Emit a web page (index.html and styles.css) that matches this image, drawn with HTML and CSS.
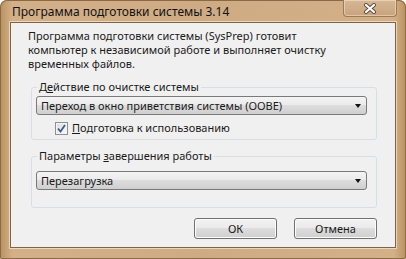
FILE: index.html
```html
<!DOCTYPE html>
<html lang="ru">
<head>
  <meta charset="UTF-8" />
  <meta name="viewport" content="width=device-width, initial-scale=1.0"/>
  <title>Программа подготовки системы 3.14</title>
  <link rel="stylesheet" href="styles.css">
</head>
<body>
  <div class="window">
    <div class="titlebar">
      <span class="title">Программа подготовки системы 3.14</span>
      <div class="close">
        <svg width="14" height="11" viewBox="0 0 14 11">
          <path d="M3 2 L11 9 M11 2 L3 9" stroke="#5a4a3a" stroke-width="4" stroke-linecap="round"/>
          <path d="M3 2 L11 9 M11 2 L3 9" stroke="#fff" stroke-width="2.2" stroke-linecap="round"/>
        </svg>
      </div>
    </div>

    <div class="client">
      <p class="intro">Программа подготовки системы (SysPrep) готовит компьютер к независимой работе и выполняет очистку временных файлов.</p>

      <fieldset class="group group-clean">
        <legend>Д<u>е</u>йствие по очистке системы</legend>
        <div class="combo">
          <span>Переход в окно приветствия системы (OOBE)</span>
          <span class="arrow"></span>
        </div>
        <label class="check">
          <span class="box">
            <svg width="9" height="9" viewBox="0 0 9 9">
              <path d="M1 4.5 L3.5 7.5 L8 1" fill="none" stroke="#3b5a9a" stroke-width="1.8"/>
            </svg>
          </span>
          <span><u>П</u>одготовка к использованию</span>
        </label>
      </fieldset>

      <fieldset class="group group-shutdown">
        <legend>Параметры <u>з</u>авершения работы</legend>
        <div class="combo">
          <span>Перезагрузка</span>
          <span class="arrow"></span>
        </div>
      </fieldset>

      <div class="buttons">
        <button class="btn">ОК</button>
        <button class="btn">Отмена</button>
      </div>
    </div>
  </div>
</body>
</html>
```

FILE: styles.css
```css
body {
  margin: 0;
  font-family: 'Noto Sans', 'Open Sans', sans-serif;
  color: #1a1a1a;
}
.window {
  width: 406px;
  height: 259px;
  box-sizing: border-box;
  padding: 0 10px 11px 10px;
  display: flex;
  flex-direction: column;
  border-radius: 7px 7px 2px 2px;
  background: linear-gradient(90deg, #b8915e 0%, #d3b088 3%, #cfab84 50%, #d3b088 97%, #b8915e 100%);
  box-shadow: inset 0 0 0 1px #8a6a45;
}
.titlebar {
  height: 22px;
  display: flex;
  align-items: center;
}
.title {
  font-size: 12px;
  padding-left: 2px;
  color: #111;
}
.close {
  margin-left: auto;
  margin-right: -1px;
  align-self: flex-start;
  width: 54px;
  height: 17px;
  box-sizing: border-box;
  border: 1px solid #9a7a58;
  border-top: none;
  border-radius: 0 0 4px 4px;
  box-shadow: inset 0 0 0 1px rgba(255, 240, 220, 0.45);
  background: linear-gradient(#d6b894, #c7a37c);
  display: flex;
  align-items: center;
  justify-content: center;
}
.client {
  flex: 1;
  background: #f0f0f0;
  border: 1px solid #7d6446;
  box-shadow: 0 0 0 1px rgba(255, 240, 220, 0.6);
  padding: 0 18px 0 17px;
  display: flex;
  flex-direction: column;
}
.intro {
  margin: 6px 0 0 0;
  width: 300px;
  font-size: 11px;
  line-height: 14px;
}
.group {
  margin: 9px 0 0 3px;
  padding: 0 9px 0 4px;
  border: 1px solid #d5dfe5;
  border-radius: 3px;
  font-size: 11px;
}
.group legend {
  padding: 0 2px;
  margin-left: 1px;
  line-height: 14px;
}
.combo {
  height: 19px;
  box-sizing: border-box;
  margin-top: 2px;
  border: 1px solid #7a7a7a;
  border-radius: 3px;
  background: linear-gradient(#f4f4f4 0%, #ebebeb 45%, #dddddd 50%, #cfcfcf 100%);
  display: flex;
  align-items: center;
  padding: 0 5px 0 4px;
  line-height: 14px;
}
.combo .arrow {
  margin-left: auto;
  width: 0;
  height: 0;
  border-left: 3.5px solid transparent;
  border-right: 3.5px solid transparent;
  border-top: 4px solid #111;
}
.check {
  display: flex;
  align-items: center;
  gap: 4px;
  margin: 6px 0 4px 19px;
  line-height: 14px;
}
.check .box {
  width: 13px;
  height: 13px;
  box-sizing: border-box;
  border: 1px solid #8e8f8f;
  background: linear-gradient(135deg, #dcdcdc, #fbfbfb);
  box-shadow: inset 0 0 0 1px #f4f4f4;
  display: flex;
  align-items: center;
  justify-content: center;
}
.group-shutdown .combo {
  margin-top: 8px;
  margin-bottom: 17px;
}
.buttons {
  display: flex;
  justify-content: flex-end;
  gap: 17px;
  margin-top: 10px;
}
.btn {
  width: 83px;
  height: 21px;
  font-family: 'Noto Sans', 'Open Sans', sans-serif;
  font-size: 11px;
  color: #1a1a1a;
  border: 1px solid #707070;
  border-radius: 3px;
  background: linear-gradient(#f2f2f2 0%, #ebebeb 45%, #dddddd 50%, #cfcfcf 100%);
  box-shadow: inset 0 0 0 1px #fcfcfc;
  padding: 0;
}
```
